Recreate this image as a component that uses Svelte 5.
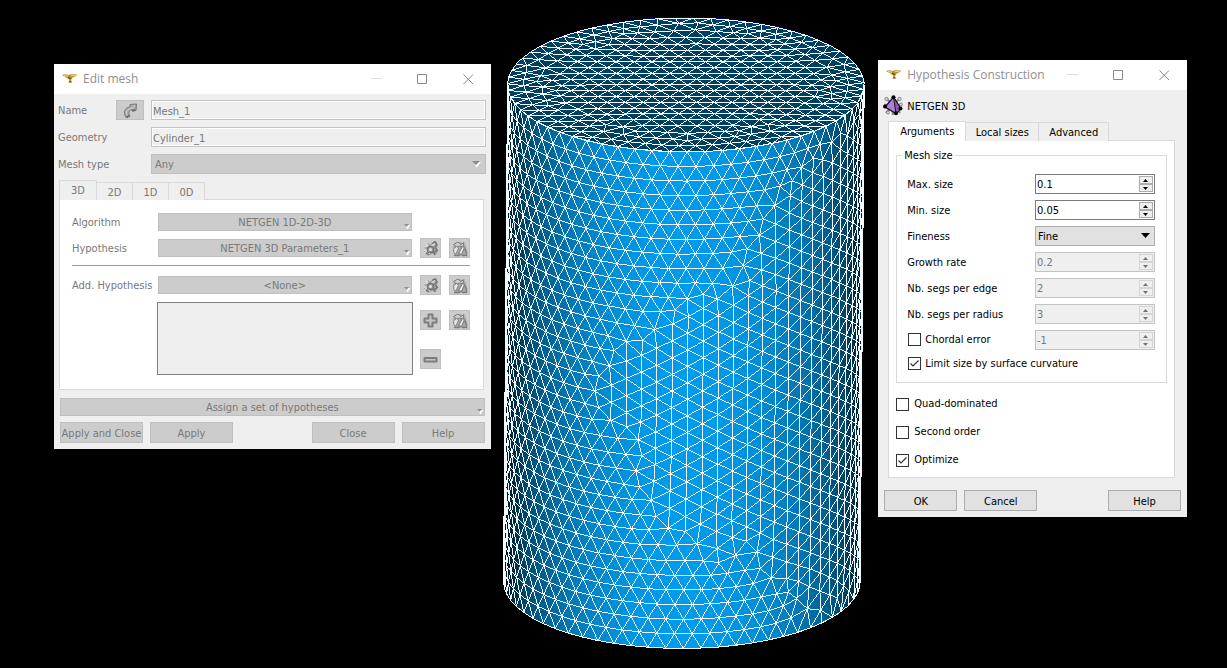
<script>
  // ---- Surface mesh of the cylinder ----
  const STEP = 0.0997;
  const CX = 685;
  const RX = 178.5;
  const RY = 67;
  const HEIGHT = 497;
  const VMAX = 3.0;

  function delaunay(pts) {
    const n = pts.length;
    // A tiny deterministic offset keeps cocircular rim points out of degenerate cases.
    const nudge = (i, k) => (((i * 7919 + k * 104729) % 1013) / 1013 - 0.5) * 2e-4;
    const all = [...pts.map((p, i) => [p[0] + nudge(i, 1), p[1] + nudge(i * 3 + 5, 2)]), [-60, -50], [60, -50], [0, 90]];
    const circle = (a, b, c) => {
      const [ax, ay] = all[a];
      const bx = all[b][0] - ax, by = all[b][1] - ay;
      const cx = all[c][0] - ax, cy = all[c][1] - ay;
      const d = 2 * (bx * cy - by * cx) || 1e-12;
      const b2 = bx * bx + by * by, c2 = cx * cx + cy * cy;
      const x = (cy * b2 - by * c2) / d, y = (bx * c2 - cx * b2) / d;
      return { a, b, c, x: ax + x, y: ay + y, r: x * x + y * y };
    };
    let tris = [circle(n, n + 1, n + 2)];
    for (let i = 0; i < n; i++) {
      const [px, py] = all[i];
      const keep = [];
      const edges = new Map();
      for (const t of tris) {
        if ((px - t.x) ** 2 + (py - t.y) ** 2 < t.r) {
          for (const [p, q] of [[t.a, t.b], [t.b, t.c], [t.c, t.a]]) {
            const k = p < q ? p * 10000 + q : q * 10000 + p;
            if (edges.has(k)) edges.set(k, null);
            else edges.set(k, [p, q]);
          }
        } else keep.push(t);
      }
      for (const e of edges.values()) if (e) keep.push(circle(e[0], e[1], i));
      tris = keep;
    }
    const result = new Map();
    for (const t of tris) {
      for (const [p, q] of [[t.a, t.b], [t.b, t.c], [t.c, t.a]]) {
        if (p < n && q < n) result.set(Math.min(p, q) * 10000 + Math.max(p, q), [p, q]);
      }
    }
    return [...result.values()];
  }

  function smooth(pts, fixed, rounds) {
    let edges = delaunay(pts);
    for (let r = 0; r < rounds; r++) {
      const sum = pts.map(() => [0, 0, 0]);
      for (const [p, q] of edges) {
        sum[p][0] += pts[q][0]; sum[p][1] += pts[q][1]; sum[p][2]++;
        sum[q][0] += pts[p][0]; sum[q][1] += pts[p][1]; sum[q][2]++;
      }
      pts = pts.map((p, i) => (fixed(p) || !sum[i][2] ? p : [sum[i][0] / sum[i][2], sum[i][1] / sum[i][2]]));
      if (r === rounds - 1) edges = delaunay(pts);
    }
    return { pts, edges };
  }

  const project = ([u, v]) => [
    CX - (4 * v) / VMAX + RX * Math.sin(u),
    85 + (HEIGHT * v) / VMAX + RY * Math.cos(u),
  ];

  // Seam between the row-aligned and the column-aligned patches, as [y, x].
  const seam = [[140, 830], [165, 800], [200, 770], [240, 752], [268, 742], [290, 700], [310, 668], [330, 640], [360, 618],
    [390, 598], [430, 606], [460, 636], [490, 650], [520, 672], [545, 706], [565, 760], [590, 784], [620, 792], [660, 800]];
  function seamX(y) {
    for (let i = 1; i < seam.length; i++) {
      if (y <= seam[i][0]) {
        const [y0, x0] = seam[i - 1], [y1, x1] = seam[i];
        return x0 + ((x1 - x0) * (y - y0)) / (y1 - y0);
      }
    }
    return 800;
  }

  function sideMesh() {
    const half = Math.PI / 2;
    const rows = 34;
    const dv = VMAX / rows;
    const pts = [];
    for (let r = 0; r <= rows; r++) {
      const v = r * dv;
      for (let k = -16; k <= 16; k++) {
        const u = 0.008 + (k + (r % 2 ? 0.5 : 0)) * STEP;
        if (Math.abs(u) > half) continue;
        const [x, y] = project([u, v]);
        if (r === 0 || r === rows || x < seamX(y)) pts.push([u, v]);
      }
    }
    const left = pts.slice();
    for (let c = -12; c < 19; c++) {
      const u = 0.02 + c * STEP * 0.866;
      if (u > half) continue;
      for (let k = 0; k < 32; k++) {
        const v = (k + (c % 2 ? 0.5 : 0)) * STEP;
        if (v < 0.06 || v > VMAX - 0.06) continue;
        const [x, y] = project([u, v]);
        if (x < seamX(y)) continue;
        if (left.some((p) => Math.hypot(p[0] - u, p[1] - v) < STEP * 0.68)) continue;
        pts.push([u, v]);
      }
    }
    const fixed = (p) => p[1] < 0.01 || p[1] > VMAX - 0.01 || Math.abs(p[0]) > 1.45;
    return smooth(pts, fixed, 2);
  }

  function capMesh() {
    const pts = [];
    const rings = [[1, 63], [0.915, 58], [0.83, 53]];
    for (const [radius, count] of rings) {
      for (let i = 0; i < count; i++) {
        const a = 0.008 + ((i + (radius === 0.915 ? 0.5 : 0)) * 2 * Math.PI) / count;
        pts.push([radius * Math.sin(a), radius * Math.cos(a)]);
      }
    }
    for (let r = -11; r <= 11; r++) {
      for (let k = -11; k <= 11; k++) {
        const x = (k + (r % 2 ? 0.5 : 0)) * STEP + 0.01;
        const y = r * STEP * 0.866;
        if (Math.hypot(x, y) < 0.765) pts.push([x, y]);
      }
    }
    return smooth(pts, (p) => Math.hypot(p[0], p[1]) > 0.99, 3);
  }

  const toPath = ({ pts, edges }, place) => {
    const at = pts.map((p) => place(p).map((n) => n.toFixed(1)).join(' '));
    return edges.map(([p, q]) => `M${at[p]}L${at[q]}`).join('');
  };

  const sidePath = toPath(sideMesh(), project);
  const capPath = toPath(capMesh(), ([x, y]) => [CX + RX * x, 85 + RY * y]);

  const shades = Array.from({ length: 21 }, (_, i) => {
    const s = (i - 10) / 10;
    const light = Math.max(0.14, Math.sqrt(1 - Math.min(1, s * s)));
    return { offset: i / 20, color: `rgb(0 ${Math.round(155 * light)} ${Math.round(236 * light)})` };
  });

  // ---- Dialog data ----
  const meshTabs = ['3D', '2D', '1D', '0D'];
  const hypTabs = ['Arguments', 'Local sizes', 'Advanced'];
  let activeTab = $state('Arguments');
  let maxSize = $state('0.1');
  let minSize = $state('0.05');
  let fineness = $state('Fine');
  let chordal = $state(false);
  let limit = $state(true);
  let quad = $state(false);
  let second = $state(false);
  let optimize = $state(true);
</script>

{#snippet logo()}
  <svg class="logo" width="16" height="12" viewBox="0 0 16 12" aria-hidden="true">
    <path d="M0 2.2C2 .8 4.500 1 6.500 2.200 8 1 10 1.200 15.500 1.600 14.500 3.400 12.500 3.600 11 4.200L9.500 6.200 9 8.500 10.500 9.500H5.800L7.400 8.500 7 6.500C5 5 3.500 3.200 0 2.200Z" fill="#b8932f" />
    <path d="M2 2.200 6 3.400M9 2.800 14 2" stroke="#efd98a" stroke-width="1" />
    <path d="M6 4.500 9 5.500M7 8.800H9.500" stroke="#5d430e" stroke-width="1" />
  </svg>
{/snippet}

{#snippet titlebar(title)}
  <header class="titlebar">
    {@render logo()}
    <h1>{title}</h1>
    <button class="win" aria-label="Minimize"><svg width="11" height="11" viewBox="0 0 11 11"><path d="M0 4.500H11" stroke="#dedede" /></svg></button>
    <button class="win" aria-label="Maximize"><svg width="11" height="11" viewBox="0 0 11 11"><path d="M.5.5H9.500V9.500H.5Z" fill="none" stroke="#8a8a8a" /></svg></button>
    <button class="win" aria-label="Close"><svg width="11" height="11" viewBox="0 0 11 11"><path d="M.5.5 10 10M10 .5.5 10" stroke="#8a8a8a" /></svg></button>
  </header>
{/snippet}

{#snippet gearIcon()}
  <svg width="17" height="17" viewBox="0 0 17 17" aria-hidden="true">
    <path d="M6 3 8 4.500 11 2.500 14.500 1.500 15.500 5 15 9 15.500 12 14 15 10 14 7 15.500 4 15 3.500 12.500 1 11 3 8.500 2 6 5 5.500Z" fill="#a6a6a6" />
    <path d="M3 13 13 3M2.500 6.500 6 6M4 3.500 6 6M6 15 8 12M1.500 10.500 5 9.500" stroke="#dcdcdc" stroke-width="1.500" />
    <path d="M10 3.500 13 1.800 15 5 12.500 7.500M13.500 8 15.500 10.500 12 12.500 13 15M4 12.500 7 15" fill="none" stroke="#727272" stroke-width="1.400" />
    <circle cx="8.500" cy="9.500" r="3.400" fill="#909090" stroke="#6c6c6c" />
    <circle cx="8.500" cy="9.500" r="1.500" fill="#e6e6e6" />
  </svg>
{/snippet}

{#snippet editIcon()}
  <svg width="17" height="17" viewBox="0 0 17 17" aria-hidden="true">
    <path d="M2 7 4 3 9 2 15 5 16 13 13 16H4Z" fill="#a8a8a8" />
    <path d="M2.500 4.500 7 2 10 4.500 13 2.500 12 7 8.500 6 6 7Z" fill="#cfcfcf" stroke="#7b7b7b" />
    <path d="M2.500 9 5.500 6.500 7.500 8 5 14 3 13Z" fill="#e8e8e8" stroke="#868686" />
    <path d="M7.500 13.500 11.500 6.500 13.500 7.500 10.500 14.500Z" fill="#ededed" stroke="#717171" />
    <path d="M13.500 8.500 15.500 12V15.500H11M3 15.500H9" fill="none" stroke="#7c7c7c" stroke-width="1.500" />
  </svg>
{/snippet}

{#snippet spin(id, value, disabled)}
  <span class="spin" class:off={disabled}>
    <input {id} type="text" {value} {disabled} />
    <span class="steps">
      <button {disabled} aria-label="Increase"><svg width="5" height="3" viewBox="0 0 5 3"><path d="M2.500 0 5 3H0Z" /></svg></button>
      <button {disabled} aria-label="Decrease"><svg width="5" height="3" viewBox="0 0 5 3"><path d="M0 0H5L2.500 3Z" /></svg></button>
    </span>
  </span>
{/snippet}

{#snippet menuArrow()}
  <svg class="corner" width="6" height="5" viewBox="0 0 6 5" aria-hidden="true"><path d="M1 1H6L4 5H3Z" fill="#fff" /><path d="M0 0H5L2.500 3Z" fill="#8f8f8f" /></svg>
{/snippet}

<main>
  <section class="dialog edit" aria-label="Edit mesh">
    {@render titlebar('Edit mesh')}
    <div class="body">
      <div class="form">
        <label for="name">Name</label>
        <button class="tool wide" disabled aria-label="Restore name">
          <svg width="15" height="17" viewBox="0 0 15 17" aria-hidden="true">
            <path d="M3 15.500C-.5 10 2 5.500 7 5V2.500L13.500 2 13 8.500 10 9V7.500C6.500 8 5 10 6.500 13.500Z" fill="#a9a9a9" stroke="#7b7b7b" />
            <path d="M4 13C2.500 9.500 4.500 6.800 9 6L12 3.500" fill="none" stroke="#dcdcdc" />
            <path d="M9 9 12.500 8M3.500 15.500 7 13.500" stroke="#666" stroke-width="1.500" />
          </svg>
        </button>
        <input id="name" class="field" value="Mesh_1" disabled />
        <label class="two" for="geometry">Geometry</label>
        <input id="geometry" class="field" value="Cylinder_1" disabled />
        <label class="two" for="type">Mesh type</label>
        <span class="select off">
          <select id="type" disabled><option>Any</option></select>
          <svg width="9" height="6" viewBox="0 0 9 6" aria-hidden="true"><path d="M2 1H9L5 6H4Z" fill="#fff" /><path d="M0 0H8L4 4Z" fill="#8c8c8c" /></svg>
        </span>
      </div>

      <div class="tabs" role="tablist">
        {#each meshTabs as tab, i}
          <button role="tab" aria-selected={i === 0} disabled>{tab}</button>
        {/each}
      </div>
      <div class="panel">
        <span class="caption">Algorithm</span>
        <button class="menu" disabled>NETGEN 1D-2D-3D{@render menuArrow()}</button>
        <span class="pad"></span>
        <span class="caption">Hypothesis</span>
        <button class="menu" disabled>NETGEN 3D Parameters_1{@render menuArrow()}</button>
        <button class="tool" disabled aria-label="Create hypothesis">{@render gearIcon()}</button>
        <button class="tool" disabled aria-label="Edit hypothesis">{@render editIcon()}</button>
        <hr />
        <span class="caption">Add. Hypothesis</span>
        <button class="menu" disabled>&lt;None>{@render menuArrow()}</button>
        <button class="tool" disabled aria-label="Create additional hypothesis">{@render gearIcon()}</button>
        <button class="tool" disabled aria-label="Edit additional hypothesis">{@render editIcon()}</button>
        <div class="list" role="listbox" aria-label="Additional hypotheses" tabindex="-1"></div>
        <div class="stack">
          <button class="tool" disabled aria-label="Add">
            <svg width="15" height="15" viewBox="0 0 15 15" aria-hidden="true"><path d="M5.500 1.500H9.500V5.500H13.500V9.500H9.500V13.500H5.500V9.500H1.500V5.500H5.500Z" fill="#c4c4c4" stroke="#7d7d7d" stroke-width="2" stroke-linejoin="round" /></svg>
          </button>
          <button class="tool" disabled aria-label="Remove">
            <svg width="15" height="15" viewBox="0 0 15 15" aria-hidden="true"><path d="M1.500 6H13.500V9.500H1.500Z" fill="#c4c4c4" stroke="#7d7d7d" stroke-width="2" stroke-linejoin="round" /></svg>
          </button>
        </div>
        <div class="stack">
          <button class="tool" disabled aria-label="Edit selected">{@render editIcon()}</button>
        </div>
      </div>

      <button class="menu assign" disabled>Assign a set of hypotheses{@render menuArrow()}</button>
      <footer>
        <button disabled>Apply and Close</button>
        <button disabled>Apply</button>
        <button class="push" disabled>Close</button>
        <button disabled>Help</button>
      </footer>
    </div>
  </section>

  <svg class="view" viewBox="502 16 364 636" role="img" aria-label="Meshed cylinder">
    <defs>
      <linearGradient id="shade" gradientUnits="userSpaceOnUse" x1="505" y1="0" x2="862" y2="0">
        {#each shades as s}<stop offset={s.offset} stop-color={s.color} />{/each}
      </linearGradient>
    </defs>
    <path d="M506.500 85 502.500 582A178.500 67 0 0 0 859.500 582L863.500 85Z" fill="url(#shade)" />
    <ellipse cx="685" cy="84" rx="177" ry="67" fill="#0000b4" />
    <ellipse cx="685" cy="85" rx="178.500" ry="67" fill="#00405e" />
    <g fill="none" stroke="#f2fbff" stroke-width="1" shape-rendering="crispEdges">
      <path d={sidePath} />
      <path d={capPath} />
      <path d="M507 85 503 582M863 85 859 582" stroke-width="2" />
      <path d="M502.500 582A178.500 67 0 0 0 859.500 582" />
    </g>
  </svg>

  <section class="dialog hyp" aria-label="Hypothesis Construction">
    {@render titlebar('Hypothesis Construction')}
    <div class="body">
      <div class="kind">
        <svg width="20" height="21" viewBox="0 0 20 21" aria-hidden="true">
          <path d="M3 3 17 18M17 3 3 18M1 10H19M10 1V20" stroke="#8c8796" stroke-width="2.500" />
          <g fill="#d9d6e0" stroke="#777" stroke-width=".8"><circle cx="3.500" cy="4" r="1.700" /><circle cx="16.500" cy="4" r="1.700" /><circle cx="18" cy="9.500" r="1.500" /><circle cx="5" cy="17.500" r="1.500" /></g>
          <path d="M10.500 2 18 14 13 18.500 2 12Z" fill="#b080d8" stroke="#111" stroke-width="1.200" />
          <path d="M10.500 2 13 18.500 18 14Z" fill="#8a5ab6" stroke="#111" />
          <g fill="#000"><circle cx="10.500" cy="2.200" r="2" /><circle cx="2" cy="11.500" r="2" /><circle cx="13" cy="18.200" r="2" /><circle cx="17.500" cy="13.500" r="2" /></g>
        </svg>
        <span class="caption">NETGEN 3D</span>
      </div>
      <div class="tabs" role="tablist">
        {#each hypTabs as tab}
          <button role="tab" aria-selected={tab === activeTab} onclick={() => (activeTab = tab)}>{tab}</button>
        {/each}
      </div>
      <div class="panel">
        <div class="group" role="group" aria-labelledby="mesh-size">
          <span class="legend" id="mesh-size">Mesh size</span>
          <label for="max">Max. size</label>{@render spin('max', maxSize, false)}
          <label for="min">Min. size</label>{@render spin('min', minSize, false)}
          <label for="fine">Fineness</label>
          <span class="select">
            <select id="fine" bind:value={fineness}>
              <option>Very Coarse</option><option>Coarse</option><option>Moderate</option><option>Fine</option><option>Very Fine</option><option>Custom</option>
            </select>
            <svg width="9" height="5" viewBox="0 0 9 5" aria-hidden="true"><path d="M0 0H9L4.500 5Z" /></svg>
          </span>
          <label for="rate">Growth rate</label>{@render spin('rate', '0.2', true)}
          <label for="edge">Nb. segs per edge</label>{@render spin('edge', '2', true)}
          <label for="radius">Nb. segs per radius</label>{@render spin('radius', '3', true)}
          <label class="check"><input type="checkbox" bind:checked={chordal} />Chordal error</label>{@render spin('chord', '-1', true)}
          <label class="check full"><input type="checkbox" bind:checked={limit} />Limit size by surface curvature</label>
        </div>
        <div class="checks">
          <label class="check"><input type="checkbox" bind:checked={quad} />Quad-dominated</label>
          <label class="check"><input type="checkbox" bind:checked={second} />Second order</label>
          <label class="check"><input type="checkbox" bind:checked={optimize} />Optimize</label>
        </div>
      </div>
      <footer>
        <button>OK</button>
        <button>Cancel</button>
        <button class="push">Help</button>
      </footer>
    </div>
  </section>
</main>

<style>
  :global(body) { background: #000; }
  * { box-sizing: border-box; }
  main {
    display: grid;
    grid-template-columns: minmax(0, 437fr) minmax(0, 364fr) minmax(0, 309fr);
    gap: 12px;
    align-items: start;
    padding: 16px 40px 16px 54px;
    font: 11px/14px "DejaVu Sans Condensed", "DejaVu Sans", sans-serif;
    color: #000;
  }
  button, input, select { font: inherit; color: inherit; margin: 0; padding: 0; border-radius: 0; }
  label, .caption { padding-top: 2px; }
  footer button, .menu, .tabs button { padding-top: 2px; }
  .view { display: block; width: 100%; height: auto; }
  .dialog { background: #efefef; }
  .edit { margin-top: 48px; color: #787878; }
  .hyp { margin-top: 44px; }

  .titlebar { display: flex; align-items: center; height: 30px; padding-left: 8px; background: #fff; }
  .logo { flex: none; margin-right: 5px; }
  h1 { flex: 1; margin: 0; font: 12px/16px "Open Sans", "Noto Sans", sans-serif; color: #8f8f8f; white-space: nowrap; }
  .win { flex: none; display: grid; place-items: center; width: 46px; height: 30px; padding-left: 1px; border: 0; background: none; }

  .edit .body { padding: 6px; }
  .form { display: grid; grid-template-columns: 49px 28px 1fr; column-gap: 7px; row-gap: 7px; align-items: center; margin-right: -1px; padding-left: -1px; }
  .form label { margin-left: -2px; }
  .form .two { grid-column: span 2; }
  .field { width: 100%; height: 20px; padding: 2px 1px 0; border: 1px solid #c3c3c3; outline: 1px solid #fff; outline-offset: -2px; background: #efefef; }

  .select { position: relative; display: block; }
  .select select { appearance: none; display: block; width: 100%; height: 20px; padding: 2px 2px 0; border: 1px solid #adadad; background: #e1e1e1; color: #000; opacity: 1; }
  .select svg { position: absolute; right: 5px; top: 7px; pointer-events: none; }
  .select.off select { background: #ccc; border-color: #bfbfbf; color: #787878; padding: 2px 3px 0; }

  .tabs { display: flex; align-items: flex-end; }
  .tabs button { height: 18px; border: 1px solid #d9d9d9; border-left-width: 0; border-bottom: 0; background: #efefef; }
  .tabs button[aria-selected='true'] { border-left-width: 1px; z-index: 1; padding-top: 0; }
  .edit .tabs { margin: 6px 0 0 -1px; }
  .edit .tabs button { width: 36px; }
  .edit .tabs button[aria-selected='true'] { width: 38px; height: 20px; }
  .panel { background: #fff; border: 1px solid #d9d9d9; }
  .edit .panel {
    display: grid;
    grid-template-columns: 78px 1fr 21px 21px;
    column-gap: 8px;
    row-gap: 6px;
    align-items: center;
    margin: -1px 1px 0 -1px;
    padding: 12px 13px 14px 12px;
    white-space: nowrap;
  }
  .pad { grid-column: span 2; height: 20px; }
  hr { grid-column: 1 / -1; width: 100%; height: 1px; margin: 1px 0 3px; border: 0; background: #9a9a9a; }
  .menu { position: relative; width: 100%; height: 18px; border: 1px solid #bfbfbf; background: #ccc; }
  .corner { position: absolute; right: 1px; bottom: 1px; }
  .tool { display: grid; place-items: center; width: 21px; height: 20px; border: 1px solid #bfbfbf; background: #ccc; }
  .tool.wide { width: 28px; }
  .list { grid-column: 2; height: 73px; border: 1px solid #808080; background: #efefef; margin: 1px -1px 0; }
  .stack { display: grid; align-self: start; row-gap: 19px; padding-top: 9px; }
  .assign { display: block; margin-top: 8px; }

  footer { display: flex; gap: 7px; }
  footer button { height: 21px; border: 1px solid #adadad; background: #e1e1e1; white-space: nowrap; }
  .push { margin-left: auto; }
  .edit footer { margin-top: 6px; }
  .edit footer button { width: 83px; background: #ccc; border-color: #bfbfbf; }

  .hyp .body { padding: 5px 6px 6px; }
  .kind { display: flex; align-items: center; gap: 4px; height: 21px; margin-left: -1px; }
  .hyp .tabs { margin: 5px 0 0 4px; }
  .hyp .tabs button { width: 73px; height: 19px; }
  .hyp .tabs button:last-child { width: 70px; }
  .hyp .tabs button[aria-selected='true'] { width: 78px; height: 20px; position: relative; background: #fff; }
  .hyp .panel { margin: -1px 6px 0 4px; padding: 14px 7px 10px; }
  .group {
    position: relative;
    display: grid;
    grid-template-columns: 1fr 120px;
    column-gap: 6px;
    row-gap: 6px;
    align-items: center;
    padding: 18px 11px 10px 10px;
    border: 1px solid #d9d9d9;
  }
  .legend { position: absolute; left: 5px; top: -7px; padding: 0 2px; background: #fff; }
  .spin { display: flex; height: 20px; border: 1px solid #7a7a7a; background: #fff; }
  .spin input { flex: 1; min-width: 0; padding: 2px 1px 0; border: 0; background: none; }
  .steps { display: grid; width: 14px; margin: 1px; grid-template-rows: 8px 8px; }
  .steps button { display: grid; place-items: center; border: 1px solid #adadad; background: #efefef; }
  .spin.off { border-color: #c3c3c3; background: #efefef; color: #787878; }
  .off .steps button { border-color: #d4d4d4; }
  .off .steps svg { fill: #707070; }
  .check { display: flex; align-items: center; gap: 5px; padding-top: 0; }
  .group .check { padding-left: 1px; gap: 4px; padding-bottom: 1px; }
  .check input { appearance: none; flex: none; width: 13px; height: 13px; border: 1px solid #333; background: #fff; }
  .check input:checked {
    background-image: url("data:image/svg+xml,%3Csvg xmlns='http://www.w3.org/2000/svg' viewBox='0 0 11 11'%3E%3Cpath d='M1.500 5.500 4 8 9.500 2.500' fill='none' stroke='%23333' stroke-width='1.200'/%3E%3C/svg%3E");
  }
  .full { grid-column: 1 / -1; height: 16px; }
  .checks { display: grid; row-gap: 14px; padding-top: 14px; }
  .hyp footer { margin-top: 12px; }
  .hyp footer button { width: 73px; }
</style>
